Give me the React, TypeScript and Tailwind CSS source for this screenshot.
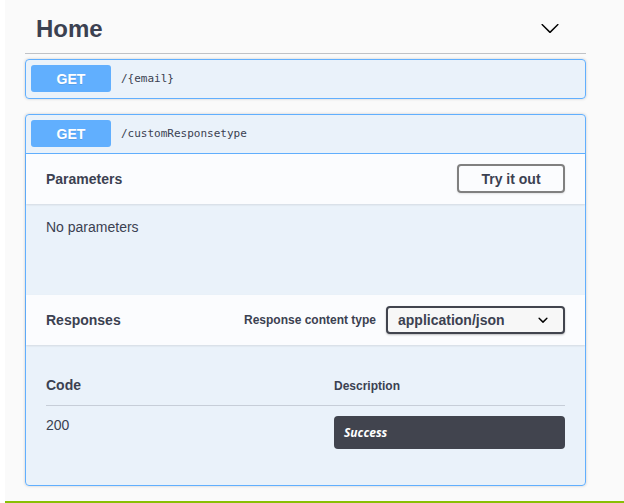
import React from "react";

const sans = "font-['Liberation_Sans',Arial,sans-serif]";
const mono = "font-['DejaVu_Sans_Mono','Liberation_Mono',monospace]";

function GetBadge() {
  return (
    <div className="flex h-[27px] w-[80px] shrink-0 items-center justify-center rounded-[3px] bg-[#61affe] pt-[2px] text-[14px] font-bold text-white [text-shadow:0_1px_0_rgba(0,0,0,0.1)]">
      GET
    </div>
  );
}

function Summary({ path, open }: { path: string; open?: boolean }) {
  return (
    <div
      className={
        "flex items-center gap-[10px] pb-[6px] pl-[5px] pt-[5px] " +
        (open ? "border-b border-[#61affe]" : "")
      }
    >
      <GetBadge />
      <span className={mono + " pt-[2px] text-[11px] text-[#3b4151]"}>{path}</span>
    </div>
  );
}

export default function App() {
  return (
    <div className={"flex min-h-[503px] bg-white " + sans}>
      <div className="ml-[5px] flex flex-1 flex-col bg-[#fafafa]">
        <div className="ml-[20px] w-[561px]">
          {/* Tag header */}
          <div className="flex h-[54px] items-center justify-between border-b border-[#3b4151]/30 pl-[11px] pr-[26px]">
            <h3 className="pt-[4px] text-[24px] font-bold text-[#3b4151]">Home</h3>
            <svg width="20" height="20" viewBox="0 0 20 20" className="mt-[2px]">
              <path
                fill="#000"
                d="M17.418 6.109c.272-.268.709-.268.979 0s.271.701 0 .969l-7.908 7.83c-.27.268-.707.268-.979 0l-7.908-7.83c-.27-.268-.27-.701 0-.969.271-.268.709-.268.979 0L10 13.25l7.418-7.141z"
              />
            </svg>
          </div>

          {/* First op */}
          <div className="mt-[5px] rounded-[4px] border border-[#61affe] bg-[#61affe]/10 shadow-[0_0_3px_rgba(0,0,0,0.19)]">
            <Summary path="/{email}" />
          </div>

          {/* Second op */}
          <div className="mt-[15px] rounded-[4px] border border-[#61affe] bg-[#61affe]/10 shadow-[0_0_3px_rgba(0,0,0,0.19)]">
            <Summary path="/customResponsetype" open />

            {/* Parameters header */}
            <div className="flex h-[50px] items-center justify-between bg-white/80 px-[20px] shadow-[0_1px_2px_rgba(0,0,0,0.1)]">
              <h4 className="text-[14px] font-bold text-[#3b4151]">Parameters</h4>
              <button className="mt-[-1px] flex h-[29px] w-[108px] items-center justify-center rounded-[4px] border-2 border-[#808080] bg-transparent pt-[1px] text-[14px] font-bold text-[#3b4151] shadow-[0_1px_2px_rgba(0,0,0,0.1)]">
                Try it out
              </button>
            </div>

            {/* Parameters body */}
            <div className="h-[91px] px-[20px] pt-[15px]">
              <p className="text-[14px] leading-[16px] text-[#3b4151]">No parameters</p>
            </div>

            {/* Responses header */}
            <div className="flex h-[50px] items-center justify-between bg-white/80 px-[20px] shadow-[0_1px_2px_rgba(0,0,0,0.1)]">
              <h4 className="text-[14px] font-bold text-[#3b4151]">Responses</h4>
              <div className="flex items-center gap-[10px]">
                <span className="text-[12px] font-bold text-[#3b4151]">Response content type</span>
                <div className="relative flex h-[28px] w-[179px] items-center rounded-[4px] border-2 border-[#41444e] bg-[#f7f7f7] pl-[10px] shadow-[0_1px_2px_rgba(0,0,0,0.25)]">
                  <span className="text-[14px] font-bold text-[#3b4151]">application/json</span>
                  <svg width="20" height="20" viewBox="0 0 20 20" className="absolute right-[10px] top-1/2 -translate-y-1/2">
                    <path
                      fill="#000"
                      d="M13.418 7.859a.695.695 0 0 1 .978 0 .68.68 0 0 1 0 .969l-3.908 3.83a.697.697 0 0 1-.979 0l-3.908-3.83a.68.68 0 0 1 0-.969.695.695 0 0 1 .978 0L10 11l3.418-3.141z"
                    />
                  </svg>
                </div>
              </div>
            </div>

            {/* Responses body */}
            <div className="px-[20px] pb-[36px] pt-[21px]">
              <div className="flex h-[40px] items-center border-b border-[#3b4151]/20">
                <div className="w-[288px] text-[14px] font-bold text-[#3b4151]">Code</div>
                <div className="text-[12px] font-bold text-[#3b4151]">Description</div>
              </div>
              <div className="flex pt-[10px]">
                <div className="w-[288px] pt-[1px] text-[14px] leading-[16px] text-[#3b4151]">200</div>
                <div className="flex-1">
                  <div className="flex h-[33px] items-center rounded-[4px] bg-[#41444e] px-[10px] font-['Open_Sans',sans-serif] text-[12px] font-bold italic text-white">
                    Success
                  </div>
                </div>
              </div>
            </div>
          </div>
        </div>
        <div className="mt-[15px] h-[2px] bg-[#89bf04]" />
      </div>
    </div>
  );
}
